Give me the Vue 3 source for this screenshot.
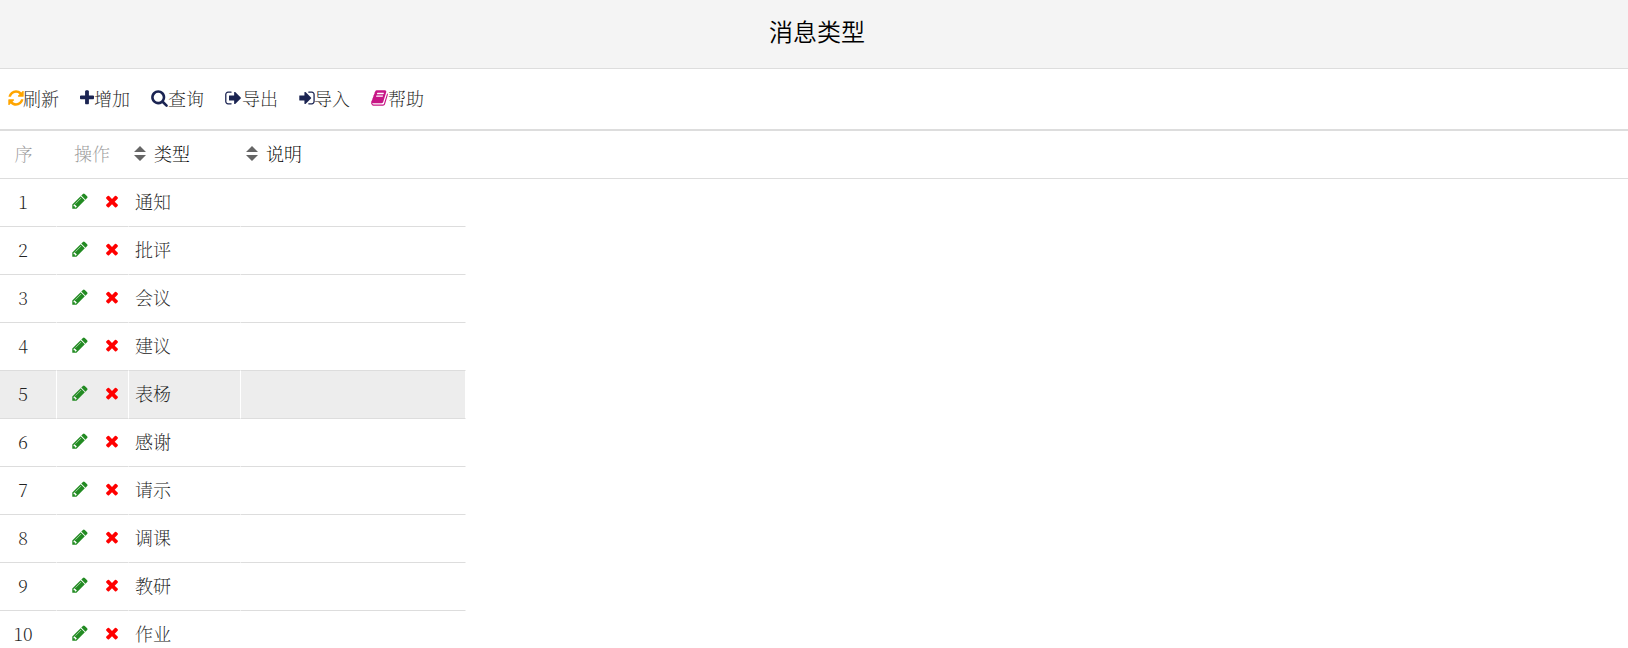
<template>
  <div class="page">
    <header class="title-bar">
      <h1>消息类型</h1>
    </header>

    <nav class="toolbar">
      <button v-for="t in tools" :key="t.label" type="button" class="tool" @click="run(t.icon)">
        <svg :class="['icon', t.icon]" :viewBox="icons[t.icon].box" aria-hidden="true">
          <path :d="icons[t.icon].d" />
        </svg>
        <span>{{ t.label }}</span>
      </button>
    </nav>

    <div class="grid-head">
      <table class="grid">
        <colgroup>
          <col class="c-no"><col class="c-op"><col class="c-type"><col class="c-desc">
        </colgroup>
        <thead>
          <tr>
            <th class="no muted">序</th>
            <th class="op muted">操作</th>
            <th v-for="c in columns" :key="c.key" class="text">
              <button type="button" class="sorter" @click="sortBy(c.key)">
                <svg class="carets" viewBox="0 0 12 16" aria-hidden="true">
                  <path d="M6 1L12 7H0ZM0 10H12L6 16Z" />
                </svg>
                <span>{{ c.label }}</span>
              </button>
            </th>
          </tr>
        </thead>
      </table>
    </div>

    <table class="grid grid-body">
      <colgroup>
        <col class="c-no"><col class="c-op"><col class="c-type"><col class="c-desc">
      </colgroup>
      <tbody>
        <tr
          v-for="(row, i) in rows"
          :key="row.type"
          :class="{ selected: row.type === selected }"
          @click="selected = row.type"
        >
          <td class="no">{{ i + 1 }}</td>
          <td class="op">
            <div class="ops">
              <button type="button" aria-label="修改">
                <svg class="icon pencil" :viewBox="icons.pencil.box" aria-hidden="true">
                  <path :d="icons.pencil.d" />
                </svg>
              </button>
              <button type="button" aria-label="删除" @click.stop="remove(row)">
                <svg class="icon times" :viewBox="icons.times.box" aria-hidden="true">
                  <path :d="icons.times.d" />
                </svg>
              </button>
            </div>
          </td>
          <td class="text">{{ row.type }}</td>
          <td class="text">{{ row.desc }}</td>
        </tr>
      </tbody>
    </table>
  </div>
</template>

<script setup>
import { ref } from 'vue'

const tools = [
  { icon: 'refresh', label: '刷新' },
  { icon: 'plus', label: '增加' },
  { icon: 'search', label: '查询' },
  { icon: 'sign-out', label: '导出' },
  { icon: 'sign-in', label: '导入' },
  { icon: 'book', label: '帮助' },
]

const columns = [
  { key: 'type', label: '类型' },
  { key: 'desc', label: '说明' },
]

const initial = ['通知', '批评', '会议', '建议', '表杨', '感谢', '请示', '调课', '教研', '作业']
const load = () => initial.map((type) => ({ type, desc: '' }))

const rows = ref(load())
const selected = ref('表杨')

function run(name) {
  if (name === 'refresh') rows.value = load()
}
function sortBy(key) {
  rows.value.sort((a, b) => a[key].localeCompare(b[key], 'zh'))
}
function remove(row) {
  rows.value = rows.value.filter((r) => r !== row)
}

// Drawn on a 1792 unit em; each box is cropped to the glyph's own advance.
const icons = {
  refresh: {
    box: '128 0 1536 1792',
    d: 'M1639 1056q0 5-1 7-64 268-268 434.5t-478 166.5q-146 0-282.5-55t-243.5-157l-129 129q-19 19-45 19t-45-19-19-45v-448q0-26 19-45t45-19h448q26 0 45 19t19 45-19 45l-137 137q71 66 161 102t187 36q134 0 250-65t186-179q11-17 53-117 8-23 30-23h192q13 0 22.5 9.5t9.5 22.5zm25-800v448q0 26-19 45t-45 19h-448q-26 0-45-19t-19-45 19-45l138-138q-148-137-349-137-134 0-250 65t-186 179q-11 17-53 117-8 23-30 23h-199q-13 0-22.5-9.5t-9.5-22.5v-7q65-268 270-434.5t480-166.5q146 0 284 55.5t245 156.5l130-129q19-19 45-19t45 19 19 45z',
  },
  plus: {
    box: '192 0 1408 1792',
    d: 'M1600 736v192q0 40-28 68t-68 28h-416v416q0 40-28 68t-68 28h-192q-40 0-68-28t-28-68v-416h-416q-40 0-68-28t-28-68v-192q0-40 28-68t68-28h416v-416q0-40 28-68t68-28h192q40 0 68 28t28 68v416h416q40 0 68 28t28 68z',
  },
  search: {
    box: '64 0 1664 1792',
    d: 'M1216 832q0-185-131.5-316.5t-316.5-131.5-316.5 131.5-131.5 316.5 131.5 316.5 316.5 131.5 316.5-131.5 131.5-316.5zm512 832q0 52-38 90t-90 38q-54 0-90-38l-343-342q-179 124-399 124-143 0-273.5-55.5t-225-150-150-225-55.5-273.5 55.5-273.5 150-225 225-150 273.5-55.5 273.5 55.5 225 150 150 225 55.5 273.5q0 220-124 399l343 343q37 37 37 90z',
  },
  'sign-out': {
    box: '64 0 1664 1792',
    d: 'M704 1440q0 4 1 20t.5 26.5-3 23.5-10 19.5-20.5 6.5h-320q-119 0-203.5-84.5t-84.5-203.5v-704q0-119 84.5-203.5t203.5-84.5h320q13 0 22.5 9.5t9.5 22.5q0 4 1 20t.5 26.5-3 23.5-10 19.5-20.5 6.5h-320q-66 0-113 47t-47 113v704q0 66 47 113t113 47h312l11.5 1 11.5 3 8 5.5 7 9 2 13.5zm928-544q0 26-19 45l-544 544q-19 19-45 19t-45-19-19-45v-288h-448q-26 0-45-19t-19-45v-384q0-26 19-45t45-19h448v-288q0-26 19-45t45-19 45 19l544 544q19 19 19 45z',
  },
  'sign-in': {
    box: '128 0 1536 1792',
    d: 'M1312 896q0 26-19 45l-544 544q-19 19-45 19t-45-19-19-45v-288h-448q-26 0-45-19t-19-45v-384q0-26 19-45t45-19h448v-288q0-26 19-45t45-19 45 19l544 544q19 19 19 45zm352-352v704q0 119-84.5 203.5t-203.5 84.5h-320q-13 0-22.5-9.5t-9.5-22.5q0-4-1-20t-.5-26.5 3-23.5 10-19.5 20.5-6.5h320q66 0 113-47t47-113v-704q0-66-47-113t-113-47h-312l-11.5-1-11.5-3-8-5.5-7-9-2-13.5q0-4-1-20t-.5-26.5 3-23.5 10-19.5 20.5-6.5h320q119 0 203.5 84.5t84.5 203.5z',
  },
  book: {
    box: '64 0 1664 1792',
    d: 'M1703 478q40 57 18 129l-275 906q-19 64-76.5 107.5t-122.5 43.5h-923q-77 0-148.5-53.5t-99.5-131.5q-24-67-2-127 0-4 3-27t4-37q1-8-3-21.5t-3-19.5q2-11 8-21t16.5-23.5 16.5-23.5q23-38 45-91.5t30-91.5q3-10 .5-30t-.5-28q3-11 17-28t17-23q21-36 42-92t25-90q1-9-2.5-32t.5-28q4-13 22-30.5t22-22.5q19-26 42.5-84.5t27.5-96.5q1-8-3-25.5t-2-26.5q2-8 9-18t18-23 17-21q8-12 16.5-30.5t15-35 16-36 19.5-32 26.5-23.5 36-11.5 47.5 5.5l-1 3q38-9 51-9h761q74 0 114 56t18 130l-274 906q-36 119-71.5 153.5t-128.5 34.5h-869q-27 0-38 15-11 16-1 43 24 70 144 70h923q29 0 56-15.5t35-41.5l300-987q7-22 5-57 38 15 59 43zm-1064 2q-4 13 2 22.5t20 9.5h608q13 0 25.5-9.5t16.5-22.5l21-64q4-13-2-22.5t-20-9.5h-608q-13 0-25.5 9.5t-16.5 22.5zm-83 256q-4 13 2 22.5t20 9.5h608q13 0 25.5-9.5t16.5-22.5l21-64q4-13-2-22.5t-20-9.5h-608q-13 0-25.5 9.5t-16.5 22.5z',
  },
  pencil: {
    box: '128 0 1536 1792',
    d: 'M491 1536l91-91-235-235-91 91v107h128v128h107zm523-928q0-22-22-22-10 0-17 7l-542 542q-7 7-7 17 0 22 22 22 10 0 17-7l542-542q7-7 7-17zm-54-192l416 416-832 832h-416v-416zm683 96q0 53-37 90l-166 166-416-416 166-165q36-38 90-38 53 0 91 38l235 234q37 39 37 91z',
  },
  times: {
    box: '192 0 1408 1792',
    d: 'M1490 1322q0 40-28 68l-136 136q-28 28-68 28t-68-28l-294-294-294 294q-28 28-68 28t-68-28l-136-136q-28-28-28-68t28-68l294-294-294-294q-28-28-28-68t28-68l136-136q28-28 68-28t68 28l294 294 294-294q28-28 68-28t68 28l136 136q28 28 28 68t-28 68l-294 294 294 294q28 28 28 68z',
  },
}
</script>

<style>
body { background:#fff; overflow:hidden; }
</style>

<style scoped>
.page {
  color:#222; font-size:18px; line-height:24px;
  font-family:"Noto Serif CJK SC","Source Han Serif SC","SimSun",serif;
  font-weight:200;
}
button {
  background:none; border:0; padding:0; margin:0; cursor:pointer;
  font:inherit; color:inherit;
}
.title-bar {
  display:flex; justify-content:center; padding:15px 0 21px 6px;
  background:#f4f4f4; border-bottom:1px solid #ddd;
}
h1 {
  margin:0; font-size:24px; line-height:32px; font-weight:350; color:#000;
  font-family:"Noto Sans CJK SC",sans-serif;
}

.toolbar {
  display:flex; align-items:center; gap:21px; height:58px; padding:0 8px 2px;
  border-bottom:2px solid #ddd; box-sizing:content-box;
}
.tool { display:flex; align-items:center; white-space:nowrap; }
.icon { display:block; width:16px; height:18px; fill:#1b2452; }
.icon.refresh, .icon.sign-in { margin-right:-1px; }
.icon.refresh { fill:#ffa500; }
.icon.plus { width:14px; }
.icon.search, .icon.sign-out { width:17px; }
.icon.book { width:17px; fill:#c71585; }
.icon.pencil { fill:#228b22; }
.icon.times { width:14px; fill:#f00; }

.grid-head { border-bottom:1px solid #ddd; }
.grid { width:466px; table-layout:fixed; border-collapse:separate; border-spacing:0; }
.c-no { width:57px; }
.c-op { width:72px; }
.c-type { width:112px; }
.c-desc { width:225px; }
th, td { height:43px; padding:0 6px 4px; font-weight:inherit; text-align:left; }
td { border-bottom:1px solid #ddd; border-right:1px solid #fff; }
th.no, td.no { padding-left:0; padding-right:10px; text-align:center; }
th.op { padding-left:17px; padding-right:0; }
th.text { padding-left:5px; }
.muted { color:#999; }
.sorter { display:flex; align-items:center; gap:8px; color:#000; }
.carets { width:12px; height:16px; fill:#666; }
.ops { display:flex; gap:17px; padding-left:9px; }
.text { white-space:nowrap; }
.selected td { background:#ededed; }
</style>
